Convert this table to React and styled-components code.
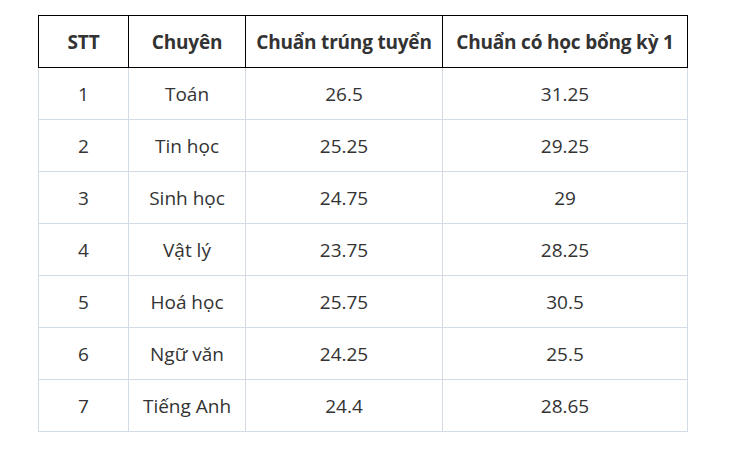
import React from 'react';
import styled, { createGlobalStyle } from 'styled-components';

const GlobalStyle = createGlobalStyle`
  body {
    margin: 0;
    background: #fff;
    font-family: "Open Sans", "Noto Sans", sans-serif;
  }
`;

const Page = styled.div`
  padding: 15px 38px;
`;

const Table = styled.table`
  border-collapse: collapse;
  width: 650px;
  table-layout: fixed;
  color: #333;
  font-size: 19px;
`;

const HeadCell = styled.th`
  width: ${({ $w }) => $w}px;
  height: 51px;
  border: 1px solid #000;
  font-weight: 700;
  padding: 0;
  text-align: center;
  white-space: nowrap;
  letter-spacing: -0.2px;
`;

const Cell = styled.td`
  height: 51px;
  border: 1px solid #d3dbe6;
  padding: 0;
  text-align: center;
`;

const columns = [
  { label: 'STT', width: 89 },
  { label: 'Chuyên', width: 116 },
  { label: 'Chuẩn trúng tuyển', width: 196 },
  { label: 'Chuẩn có học bổng kỳ 1', width: 244 },
];

const rows = [
  ['1', 'Toán', '26.5', '31.25'],
  ['2', 'Tin học', '25.25', '29.25'],
  ['3', 'Sinh học', '24.75', '29'],
  ['4', 'Vật lý', '23.75', '28.25'],
  ['5', 'Hoá học', '25.75', '30.5'],
  ['6', 'Ngữ văn', '24.25', '25.5'],
  ['7', 'Tiếng Anh', '24.4', '28.65'],
];

const App = () => {
  return (
    <Page>
      <GlobalStyle />
      <Table>
        <thead>
          <tr>
            {columns.map((c) => (
              <HeadCell key={c.label} $w={c.width}>{c.label}</HeadCell>
            ))}
          </tr>
        </thead>
        <tbody>
          {rows.map((r) => (
            <tr key={r[0]}>
              {r.map((v, i) => (
                <Cell key={i}>{v}</Cell>
              ))}
            </tr>
          ))}
        </tbody>
      </Table>
    </Page>
  );
};

export default App;
